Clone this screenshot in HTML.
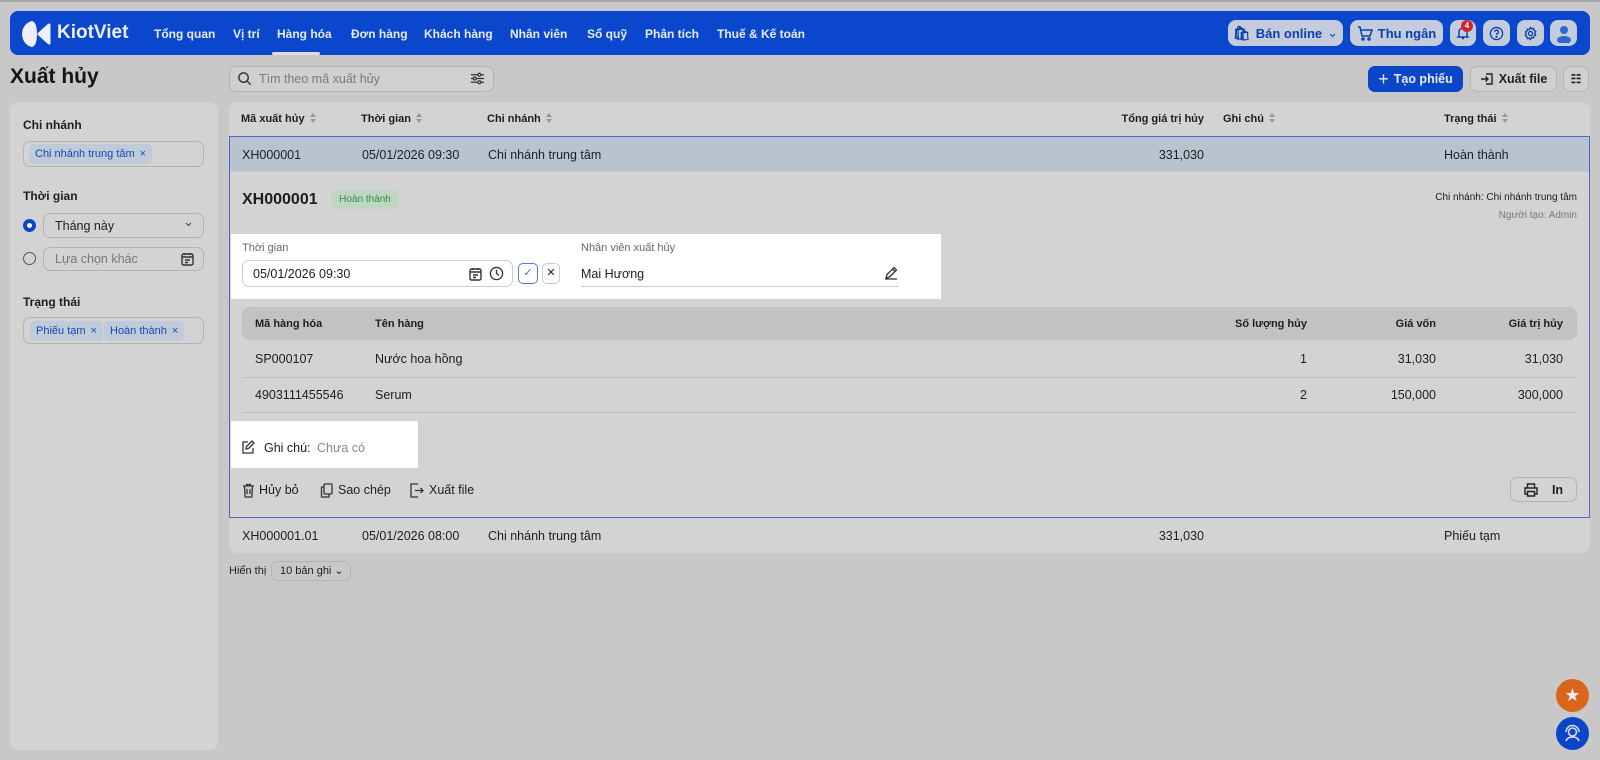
<!DOCTYPE html>
<html><head><meta charset="utf-8">
<style>
*{box-sizing:border-box;margin:0;padding:0}
body{width:1600px;height:760px;overflow:hidden;background:#c8c8c9;font-family:"Liberation Sans",Arial,sans-serif;color:#1e1e1e;position:relative;font-size:12.5px}
.a{position:absolute;white-space:nowrap}
.nav{left:10px;top:11px;width:1580px;height:44px;background:#0a47cc;border-radius:8px}
.nv{color:#e8ecf6;font-weight:bold;font-size:12px;top:27px}
.tb{background:#c3cbdc;border-radius:8px;height:26px;top:20px;color:#0b3fae;font-weight:bold;font-size:13px;display:flex;align-items:center;justify-content:center;gap:5px}
.panel{background:#d3d3d3;border-radius:8px}
.btn{border:1px solid #b6b6b6;border-radius:7px;height:26px;top:66px;display:flex;align-items:center;justify-content:center;gap:5px;font-weight:bold}
.th{font-weight:bold;font-size:11px;top:113px}
.sort{display:inline-block;width:7px;height:12px;vertical-align:middle;margin-left:5px;position:relative}
.sort:before{content:"";position:absolute;left:0;top:0;border:3.5px solid transparent;border-bottom:4px solid #999;border-top:0}
.sort:after{content:"";position:absolute;left:0;top:6px;border:3.5px solid transparent;border-top:4px solid #999;border-bottom:0}
.tag{background:#bfcbd9;color:#1846b8;border-radius:5px;font-size:11px;height:20px;display:flex;align-items:center;padding:0 6px;gap:5px}
.r{text-align:right}
.lab{font-weight:bold;font-size:12px}
</style></head><body>
<div class="a" style="left:0;top:0;width:1600px;height:2px;background:#a9a9a9"></div>
<div class="a nav"></div>
<svg class="a" style="left:22px;top:20px" width="30" height="28" viewBox="0 0 30 28"><path d="M10 1 C2 3 0 10 0 14 C0 20 4 26 10 27 C14 26 15 20 15 14 C15 8 14 2 10 1Z" fill="#eef"/><path d="M27 5 L17 14 L27 23 Z" fill="#eef" stroke="#eef" stroke-linejoin="round" stroke-width="3"/></svg>
<div class="a" style="left:57px;top:22px;color:#eef;font-size:19px;font-weight:bold">KiotViet</div>
<div class="a nv" style="left:154px">Tổng quan</div>
<div class="a nv" style="left:233px">Vị trí</div>
<div class="a nv" style="left:277px">Hàng hóa</div>
<div class="a" style="left:272px;top:52px;width:48px;height:3px;background:#dde;border-radius:2px"></div>
<div class="a nv" style="left:351px">Đơn hàng</div>
<div class="a nv" style="left:424px">Khách hàng</div>
<div class="a nv" style="left:510px">Nhân viên</div>
<div class="a nv" style="left:587px">Sổ quỹ</div>
<div class="a nv" style="left:645px">Phân tích</div>
<div class="a nv" style="left:717px">Thuế &amp; Kế toán</div>
<div class="a tb" style="left:1228px;width:115px"><span style="font-size:14px">🛍</span>Bán online <span style="font-weight:normal">⌄</span></div>
<div class="a tb" style="left:1350px;width:93px"><svg width="16" height="16" viewBox="0 0 16 16" fill="none" stroke="#0b3fae" stroke-width="1.5"><path d="M1 2h2l2 9h8l2-6H4"/><circle cx="6" cy="14" r="1"/><circle cx="12" cy="14" r="1"/></svg>Thu ngân</div>
<div class="a tb" style="left:1450px;width:26px"><svg width="14" height="14" viewBox="0 0 14 14" fill="none" stroke="#0b3fae" stroke-width="1.4"><path d="M3 10V6a4 4 0 0 1 8 0v4l1 1H2zM6 12.5h2"/></svg></div>
<div class="a" style="left:1461px;top:20px;width:12px;height:12px;border-radius:6px;background:#d3202a;color:#fff;font-size:8px;text-align:center;line-height:12px;font-weight:bold">4</div>
<div class="a tb" style="left:1483px;width:27px"><svg width="15" height="15" viewBox="0 0 16 16" fill="none" stroke="#0b3fae" stroke-width="1.4"><circle cx="8" cy="8" r="6.5"/><path d="M6 6.3a2 2 0 1 1 2.5 2c-.4.2-.5.6-.5 1.2"/><circle cx="8" cy="11.6" r=".5" fill="#0b3fae"/></svg></div>
<div class="a tb" style="left:1517px;width:27px"><svg width="15" height="15" viewBox="0 0 16 16" fill="none" stroke="#0b3fae" stroke-width="1.4"><circle cx="8" cy="8" r="2.2"/><path d="M8 1.5l1.3 1.6 2-.5.5 2 1.7 1.2-1 1.8 1 1.8-1.7 1.2-.5 2-2-.5L8 14.5l-1.3-1.6-2 .5-.5-2L2.5 10.2l1-1.8-1-1.8 1.7-1.2.5-2 2 .5z"/></svg></div>
<div class="a tb" style="left:1550px;width:27px;overflow:hidden"><svg width="20" height="20" viewBox="0 0 20 20"><circle cx="10" cy="7" r="4" fill="#2a67d1"/><ellipse cx="10" cy="17" rx="7" ry="4" fill="#2a67d1"/></svg></div>

<div class="a" style="left:10px;top:65px;font-size:21px;font-weight:bold;color:#151515">Xuất hủy</div>
<div class="a" style="left:229px;top:66px;width:265px;height:26px;border:1px solid #b4b4b4;border-radius:7px;background:#d0d0d0"></div>
<svg class="a" style="left:237px;top:71px" width="15" height="15" viewBox="0 0 16 16" fill="none" stroke="#333" stroke-width="1.5"><circle cx="7" cy="7" r="5"/><path d="M11 11l3.5 3.5"/></svg>
<div class="a" style="left:259px;top:72px;color:#7a7a7a;font-size:12.5px">Tìm theo mã xuất hủy</div>
<svg class="a" style="left:470px;top:71px" width="15" height="15" viewBox="0 0 16 16" fill="none" stroke="#333" stroke-width="1.3"><path d="M1 4h14M1 8h14M1 12h14"/><circle cx="10" cy="4" r="1.6" fill="#d0d0d0"/><circle cx="5" cy="8" r="1.6" fill="#d0d0d0"/><circle cx="10" cy="12" r="1.6" fill="#d0d0d0"/></svg>
<div class="a btn" style="left:1368px;width:95px;background:#0b45c8;border-color:#0b45c8;color:#e8ecf6"><span style="font-size:18px;font-weight:normal">+</span>Tạo phiếu</div>
<div class="a btn" style="left:1470px;width:87px;background:#d0d0d0"><svg width="14" height="14" viewBox="0 0 14 14" fill="none" stroke="#222" stroke-width="1.4"><path d="M6 2h6v10H6M1 7h7M5.5 4.5L8 7l-2.5 2.5"/></svg>Xuất file</div>
<div class="a btn" style="left:1563px;width:26px;background:#d0d0d0;font-size:12px">☷</div>

<div class="a panel" style="left:10px;top:102px;width:208px;height:648px"></div>
<div class="a lab" style="left:23px;top:118px">Chi nhánh</div>
<div class="a" style="left:23px;top:141px;width:181px;height:26px;border:1px solid #b4b4b4;border-radius:7px"></div>
<div class="a tag" style="left:29px;top:144px">Chi nhánh trung tâm <span>×</span></div>
<div class="a lab" style="left:23px;top:189px">Thời gian</div>
<div class="a" style="left:23px;top:219px;width:13px;height:13px;border-radius:7px;border:4px solid #0b45c8;background:#fff"></div>
<div class="a" style="left:43px;top:213px;width:161px;height:25px;border:1px solid #b4b4b4;border-radius:7px"></div>
<div class="a" style="left:55px;top:219px">Tháng này</div>
<div class="a" style="left:183px;top:214px;font-size:13px;color:#444">⌄</div>
<div class="a" style="left:23px;top:252px;width:13px;height:13px;border-radius:7px;border:1px solid #555"></div>
<div class="a" style="left:43px;top:247px;width:161px;height:24px;border:1px solid #b4b4b4;border-radius:7px"></div>
<div class="a" style="left:55px;top:252px;color:#777">Lựa chọn khác</div>
<svg class="a" style="left:181px;top:252px" width="13" height="14" viewBox="0 0 13 14" fill="none" stroke="#333" stroke-width="1.4"><rect x="1" y="2" width="11" height="11" rx="1.5"/><path d="M4 1v2M9 1v2M1 5h11M4 8h5M4 10.5h3"/></svg>
<div class="a lab" style="left:23px;top:295px">Trạng thái</div>
<div class="a" style="left:23px;top:317px;width:181px;height:27px;border:1px solid #b4b4b4;border-radius:7px"></div>
<div class="a tag" style="left:30px;top:321px">Phiếu tạm <span>×</span></div>
<div class="a tag" style="left:104px;top:321px">Hoàn thành <span>×</span></div>

<div class="a panel" style="left:229px;top:102px;width:1361px;height:451px"></div>
<div class="a th" style="left:241px">Mã xuất hủy<span class="sort"></span></div>
<div class="a th" style="left:361px">Thời gian<span class="sort"></span></div>
<div class="a th" style="left:487px">Chi nhánh<span class="sort"></span></div>
<div class="a th r" style="left:1104px;width:100px">Tổng giá trị hủy</div>
<div class="a th" style="left:1223px">Ghi chú<span class="sort"></span></div>
<div class="a th" style="left:1444px">Trạng thái<span class="sort"></span></div>
<div class="a" style="left:229px;top:136px;width:1361px;height:382px;border:1px solid #4f66c8;background:#d3d3d3"></div>
<div class="a" style="left:230px;top:137px;width:1359px;height:35px;background:#b8c3cf;border-bottom:1px solid #c4c9d0"></div>
<div class="a" style="left:242px;top:148px">XH000001</div>
<div class="a" style="left:362px;top:148px">05/01/2026 09:30</div>
<div class="a" style="left:488px;top:148px">Chi nhánh trung tâm</div>
<div class="a r" style="left:1104px;top:148px;width:100px">331,030</div>
<div class="a" style="left:1444px;top:148px">Hoàn thành</div>

<div class="a" style="left:242px;top:191px;font-size:16px;font-weight:bold">XH000001</div>
<div class="a" style="left:331px;top:190px;width:68px;height:19px;background:#bfd6c3;color:#2f8f46;border-radius:5px;font-size:10px;text-align:center;line-height:19px">Hoàn thành</div>
<div class="a r" style="left:1300px;top:192px;width:277px;font-size:10px">Chi nhánh: Chi nhánh trung tâm</div>
<div class="a r" style="left:1300px;top:210px;width:277px;font-size:10px;color:#777">Người tạo: Admin</div>

<div class="a" style="left:231px;top:234px;width:710px;height:65px;background:#fff"></div>
<div class="a" style="left:242px;top:242px;font-size:11px;color:#666">Thời gian</div>
<div class="a" style="left:242px;top:260px;width:271px;height:27px;border:1px solid #ccc;border-radius:7px"></div>
<div class="a" style="left:253px;top:267px">05/01/2026 09:30</div>
<svg class="a" style="left:469px;top:267px" width="13" height="14" viewBox="0 0 13 14" fill="none" stroke="#333" stroke-width="1.4"><rect x="1" y="2" width="11" height="11" rx="1.5"/><path d="M4 1v2M9 1v2M1 5h11M4 8h5M4 10.5h3"/></svg>
<svg class="a" style="left:489px;top:266px" width="15" height="15" viewBox="0 0 16 16" fill="none" stroke="#333" stroke-width="1.4"><circle cx="8" cy="8" r="6.5"/><path d="M8 4v4l2.5 2"/></svg>
<div class="a" style="left:518px;top:263px;width:20px;height:21px;border:1px solid #4a7ae0;border-radius:5px;color:#3a6fd8;text-align:center;line-height:19px;font-size:11px">✓</div>
<div class="a" style="left:542px;top:263px;width:18px;height:21px;border:1px solid #ccc;border-radius:5px;text-align:center;line-height:19px;font-size:11px">✕</div>
<div class="a" style="left:581px;top:242px;font-size:11px;color:#666">Nhân viên xuất hủy</div>
<div class="a" style="left:581px;top:267px">Mai Hương</div>
<div class="a" style="left:581px;top:286px;width:317px;height:1px;background:#ccc"></div>
<svg class="a" style="left:884px;top:266px" width="14" height="14" viewBox="0 0 14 14" fill="none" stroke="#333" stroke-width="1.3"><path d="M2 12l1-3.5L10 1.5l2.5 2.5L5.5 11zM8.5 3l2.5 2.5M1 13h12"/></svg>

<div class="a" style="left:242px;top:307px;width:1335px;height:33px;background:#c1c2c4;border-radius:8px"></div>
<div class="a th" style="left:255px;top:318px">Mã hàng hóa</div>
<div class="a th" style="left:375px;top:318px">Tên hàng</div>
<div class="a th r" style="left:1207px;top:318px;width:100px">Số lượng hủy</div>
<div class="a th r" style="left:1336px;top:318px;width:100px">Giá vốn</div>
<div class="a th r" style="left:1463px;top:318px;width:100px">Giá trị hủy</div>
<div class="a" style="left:255px;top:352px">SP000107</div>
<div class="a" style="left:375px;top:352px">Nước hoa hồng</div>
<div class="a r" style="left:1207px;top:352px;width:100px">1</div>
<div class="a r" style="left:1336px;top:352px;width:100px">31,030</div>
<div class="a r" style="left:1463px;top:352px;width:100px">31,030</div>
<div class="a" style="left:242px;top:377px;width:1335px;height:1px;background:#bdbdbd"></div>
<div class="a" style="left:255px;top:388px">4903111455546</div>
<div class="a" style="left:375px;top:388px">Serum</div>
<div class="a r" style="left:1207px;top:388px;width:100px">2</div>
<div class="a r" style="left:1336px;top:388px;width:100px">150,000</div>
<div class="a r" style="left:1463px;top:388px;width:100px">300,000</div>
<div class="a" style="left:242px;top:412px;width:1335px;height:1px;background:#bdbdbd"></div>

<div class="a" style="left:231px;top:421px;width:187px;height:47px;background:#fff"></div>
<svg class="a" style="left:241px;top:440px" width="14" height="14" viewBox="0 0 14 14" fill="none" stroke="#333" stroke-width="1.3"><path d="M7 2H2v11h10V8M5 9l.5-2.5L11 1l2 2-5.5 5.5z"/></svg>
<div class="a" style="left:264px;top:441px">Ghi chú: <span style="color:#888;margin-left:3px">Chưa có</span></div>

<svg class="a" style="left:242px;top:483px" width="13" height="15" viewBox="0 0 13 15" fill="none" stroke="#333" stroke-width="1.3"><path d="M1 3h11M4.5 3V1.5h4V3M2.5 3l.7 11h6.6l.7-11M5 6v5M8 6v5"/></svg>
<div class="a" style="left:259px;top:483px">Hủy bỏ</div>
<svg class="a" style="left:320px;top:483px" width="13" height="15" viewBox="0 0 13 15" fill="none" stroke="#333" stroke-width="1.3"><rect x="4" y="1" width="8" height="10" rx="1"/><path d="M4 4H1.5v10h7.5v-3"/></svg>
<div class="a" style="left:338px;top:483px">Sao chép</div>
<svg class="a" style="left:409px;top:483px" width="15" height="15" viewBox="0 0 15 15" fill="none" stroke="#333" stroke-width="1.3"><path d="M9 1H2v13h7M6 7.5h8M11.5 5l2.5 2.5-2.5 2.5"/></svg>
<div class="a" style="left:429px;top:483px">Xuất file</div>
<div class="a" style="left:1510px;top:477px;width:67px;height:25px;border:1px solid #b4b4b4;border-radius:7px;font-weight:bold;display:flex;align-items:center;justify-content:center;gap:14px"><svg width="14" height="14" viewBox="0 0 14 14" fill="none" stroke="#222" stroke-width="1.4"><path d="M3.5 5V1h7v4M3.5 11H1V5h12v6h-2.5M3.5 8.5h7V13h-7z"/></svg>In</div>

<div class="a" style="left:242px;top:529px">XH000001.01</div>
<div class="a" style="left:362px;top:529px">05/01/2026 08:00</div>
<div class="a" style="left:488px;top:529px">Chi nhánh trung tâm</div>
<div class="a r" style="left:1104px;top:529px;width:100px">331,030</div>
<div class="a" style="left:1444px;top:529px">Phiếu tạm</div>

<div class="a" style="left:229px;top:565px;font-size:11px">Hiển thị</div>
<div class="a" style="left:271px;top:561px;width:80px;height:20px;border:1px solid #b4b4b4;border-radius:6px;font-size:11px;line-height:18px;padding-left:8px">10 bản ghi ⌄</div>

<div class="a" style="left:1556px;top:679px;width:33px;height:33px;border-radius:17px;background:#d9661c;color:#eee;text-align:center;line-height:32px;font-size:18px">★</div>
<div class="a" style="left:1556px;top:717px;width:33px;height:33px;border-radius:17px;background:#0b45c8"></div>
<svg class="a" style="left:1563px;top:724px" width="19" height="19" viewBox="0 0 19 19" fill="none" stroke="#dde" stroke-width="1.6"><circle cx="9.5" cy="8" r="4"/><path d="M3 8a6.5 6.5 0 0 1 13 0M3 17c1-3 4-4 6.5-4s5.5 1 6.5 4"/></svg>
</body></html>
